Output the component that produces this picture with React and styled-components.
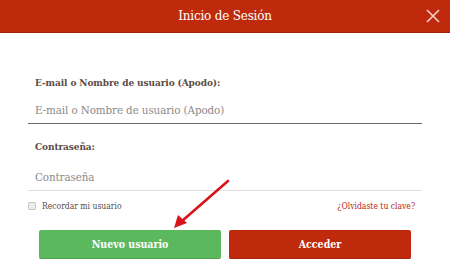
import React from 'react';
import styled, { createGlobalStyle } from 'styled-components';

const GlobalStyle = createGlobalStyle`
    html, body {
        margin: 0;
        padding: 0;
        background: #ffffff;
    }
    * {
        box-sizing: border-box;
    }
`

const serif = `"DejaVu Serif Condensed", "DejaVu Serif", "Liberation Serif", serif`

const App = () => {
    return (
        <>
            <GlobalStyle />
            <Modal>
                <Header>
                    <Title>Inicio de Sesión</Title>
                    <CloseButton>
                        <svg width="14" height="14" viewBox="0 0 14 14">
                            <path d="M1 1 L13 13 M13 1 L1 13" stroke="#f6cfc6" strokeWidth="1.6" fill="none" />
                        </svg>
                    </CloseButton>
                </Header>
                <Body>
                    <Field>
                        <Label>E-mail o Nombre de usuario (Apodo):</Label>
                        <Input placeholder="E-mail o Nombre de usuario (Apodo)" $active />
                    </Field>
                    <Field>
                        <Label>Contraseña:</Label>
                        <Input placeholder="Contraseña" type="password" $gap={15} />
                    </Field>
                    <OptionsRow>
                        <Remember>
                            <CheckBox />
                            Recordar mi usuario
                        </Remember>
                        <Forgot>¿Olvidaste tu clave?</Forgot>
                    </OptionsRow>
                    <Buttons>
                        <Button $color="#5cb85c" $border="#4ea64e">Nuevo usuario</Button>
                        <Button $color="#bf2a0c" $border="#a32208">Acceder</Button>
                    </Buttons>
                </Body>
                <Arrow width="60" height="52" viewBox="0 0 60 52">
                    <path d="M56 2 L10 42" stroke="#d9141b" strokeWidth="2.6" strokeLinecap="round" />
                    <path d="M2 49 L6 36 L15 44 Z" fill="#d9141b" />
                </Arrow>
            </Modal>
        </>
    )
}

const Modal = styled.div`
    position: relative;
    width: 450px;
    height: 267px;
    background: #ffffff;
    font-family: ${serif};
    overflow: hidden;
`

const Header = styled.div`
    display: flex;
    align-items: center;
    justify-content: center;
    position: relative;
    height: 33px;
    background: #bf2a0c;
    border-bottom: 1px solid #9c2209;
`

const Title = styled.h1`
    margin: 0;
    font-family: "DejaVu Serif", "Liberation Serif", serif;
    font-size: 12px;
    font-weight: normal;
    color: #ffffff;
    letter-spacing: -0.2px;
`

const CloseButton = styled.button`
    position: absolute;
    right: 10px;
    top: 9px;
    padding: 0;
    border: none;
    background: none;
    display: flex;
`

const Body = styled.div`
    display: flex;
    flex-direction: column;
    padding: 43px 28px 0 28px;
`

const Field = styled.div`
    display: flex;
    flex-direction: column;
    margin-bottom: 16px;
`

const Label = styled.label`
    padding-left: 7px;
    font-size: 10px;
    font-weight: bold;
    color: #5b4c45;
    letter-spacing: -0.1px;
    line-height: 14px;
`

const Input = styled.input`
    margin-top: ${({ $gap }) => $gap || 12}px;
    height: 22px;
    padding: 0 0 6px 7px;
    border: none;
    border-bottom: 1px solid ${({ $active }) => ($active ? '#6b6b6b' : '#dedede')};
    outline: none;
    font-family: ${serif};
    font-size: 11.5px;
    letter-spacing: -0.1px;
    color: #333;
    background: none;

    &::placeholder {
        color: #8a8a8a;
    }
`

const OptionsRow = styled.div`
    display: flex;
    align-items: center;
    justify-content: space-between;
    margin-top: -9px;
    padding-right: 7px;
    height: 16px;
`

const Remember = styled.div`
    display: flex;
    align-items: center;
    gap: 6px;
    font-size: 8.5px;
    color: #5b4c45;
`

const CheckBox = styled.span`
    display: inline-block;
    width: 8px;
    height: 8px;
    border: 1px solid #c8c8c8;
    background: #ececec;
    border-radius: 1px;
`

const Forgot = styled.a`
    font-size: 8.5px;
    color: #b8261a;
`

const Buttons = styled.div`
    display: flex;
    gap: 8px;
    margin-top: 16px;
    padding: 0 11px;
`

const Button = styled.button`
    flex: 1;
    height: 29px;
    border: none;
    border-bottom: 1px solid ${({ $border }) => $border};
    border-radius: 2px;
    background: ${({ $color }) => $color};
    color: #ffffff;
    font-family: ${serif};
    font-size: 10.5px;
    font-weight: bold;
`

const Arrow = styled.svg`
    position: absolute;
    left: 172px;
    top: 179px;
`

export default App
